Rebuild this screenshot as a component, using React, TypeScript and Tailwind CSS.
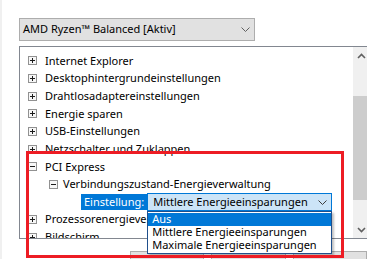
const font = { fontFamily: '"Noto Sans", "Open Sans", sans-serif' };

type Node = { label: string; level: 0 | 1; open?: boolean };

const before: Node[] = [
  { label: "Internet Explorer", level: 0 },
  { label: "Desktophintergrundeinstellungen", level: 0 },
  { label: "Drahtlosadaptereinstellungen", level: 0 },
  { label: "Energie sparen", level: 0 },
  { label: "USB-Einstellungen", level: 0 },
  { label: "Netzschalter und Zuklappen", level: 0 },
  { label: "PCI Express", level: 0, open: true },
  { label: "Verbindungszustand-Energieverwaltung", level: 1, open: true },
];

const after: Node[] = [
  { label: "Prozessorenergieverwaltung", level: 0 },
  { label: "Bildschirm", level: 0 },
];

const options = ["Aus", "Mittlere Energieeinsparungen", "Maximale Energieeinsparungen"];

function Expander({ open }: { open?: boolean }) {
  return (
    <svg width="9" height="9" viewBox="0 0 9 9" className="shrink-0">
      <rect x="0.5" y="0.5" width="8" height="8" fill="#f7f7f7" stroke="#919191" />
      <line x1="2" y1="4.5" x2="7" y2="4.5" stroke="#1b1b1b" />
      {!open && <line x1="4.5" y1="2" x2="4.5" y2="7" stroke="#1b1b1b" />}
    </svg>
  );
}

function Chevron({ color }: { color: string }) {
  return (
    <svg width="9" height="5" viewBox="0 0 9 5">
      <path d="M0.5 0.5 L4.5 4.5 L8.5 0.5" fill="none" stroke={color} />
    </svg>
  );
}

function TreeRow({ node }: { node: Node }) {
  return (
    <div
      className={
        "flex items-center h-[17.67px] whitespace-nowrap " +
        (node.level === 0 ? "pl-[8px] gap-[8px]" : "pl-[29px] gap-[5px]")
      }
    >
      <Expander open={node.open} />
      <span className="text-black">{node.label}</span>
    </div>
  );
}

export default function App() {
  return (
    <div
      className="relative w-[367px] h-[259px] overflow-hidden bg-white border-l-2 border-[#f0f0f0] text-[11px]"
      style={font}
    >
      <div className="pt-[18px] pl-[17px]">
        {/* power plan selector */}
        <div className="flex items-center justify-between w-[236px] h-[23px] border border-[#adadad] bg-[#e1e1e1] pl-[3px] pr-[4px]">
          <span className="text-black">AMD Ryzen™ Balanced [Aktiv]</span>
          <Chevron color="#606060" />
        </div>

        {/* settings tree */}
        <div className="flex mt-[5px] w-[360px] h-[193px] border-t border-l border-b border-[#828790]">
          <div className="w-[333px] h-[191px] pt-[5px]">
            {before.map((n) => (
              <TreeRow key={n.label} node={n} />
            ))}
            <div className="flex items-center h-[17.67px] pl-[61px] whitespace-nowrap">
              <span className="flex items-center h-[16px] px-[3px] bg-[#0078d7] text-white">Einstellung:</span>
              <div className="relative z-10">
                <div className="flex items-center justify-between w-[185px] h-[18px] border border-[#0078d7] bg-[#cce4f7] pl-[5px] pr-[4px]">
                  <span className="text-black">Mittlere Energieeinsparungen</span>
                  <Chevron color="#3c3c3c" />
                </div>
                {/* open drop-down list */}
                <div className="absolute left-0 top-full w-[185px] border border-[#1f4f8c] bg-white py-[1px] shadow-[2px_2px_2px_rgba(0,0,0,0.25)]">
                  {options.map((o, i) => (
                    <div
                      key={o}
                      className={
                        "flex items-center h-[13px] pl-[4px] " +
                        (i === 0 ? "bg-[#0078d7] text-white" : "text-black")
                      }
                    >
                      {o}
                    </div>
                  ))}
                </div>
              </div>
            </div>
            {/* remaining rows, cut off by the list's bottom edge */}
            <div className="h-[27px] overflow-hidden">
              {after.map((n) => (
                <TreeRow key={n.label} node={n} />
              ))}
            </div>
          </div>

          {/* vertical scrollbar */}
          <div className="flex flex-col w-[17px] bg-[#f0f0f0]">
            <div className="flex items-center justify-center h-[17px]">
              <svg width="9" height="6" viewBox="0 0 9 6">
                <path d="M1 5 L4.5 1.5 L8 5" fill="none" stroke="#606060" strokeWidth="1.6" />
              </svg>
            </div>
            <div className="h-[32px]" />
            <div className="h-[104px] bg-[#cdcdcd]" />
            <div className="flex-1" />
            <div className="flex items-center justify-center h-[17px]">
              <svg width="9" height="6" viewBox="0 0 9 6">
                <path d="M1 1 L4.5 4.5 L8 1" fill="none" stroke="#606060" strokeWidth="1.6" />
              </svg>
            </div>
          </div>
        </div>

        {/* dialog buttons, mostly cut off */}
        <div className="flex gap-[7px] mt-[12px] ml-[111px]">
          <div className="w-[75px] h-[21px] border border-[#adadad] bg-[#e1e1e1]" />
          <div className="w-[75px] h-[21px] border border-[#adadad] bg-[#e1e1e1]" />
          <div className="w-[75px] h-[21px] border border-[#adadad] bg-[#e1e1e1]" />
        </div>
      </div>

      {/* red highlight frame drawn over the dialog */}
      <div className="absolute left-[24px] top-[151px] w-[318px] h-[107px] border-[3px] border-[#ed1c24] z-20 pointer-events-none" />
    </div>
  );
}
